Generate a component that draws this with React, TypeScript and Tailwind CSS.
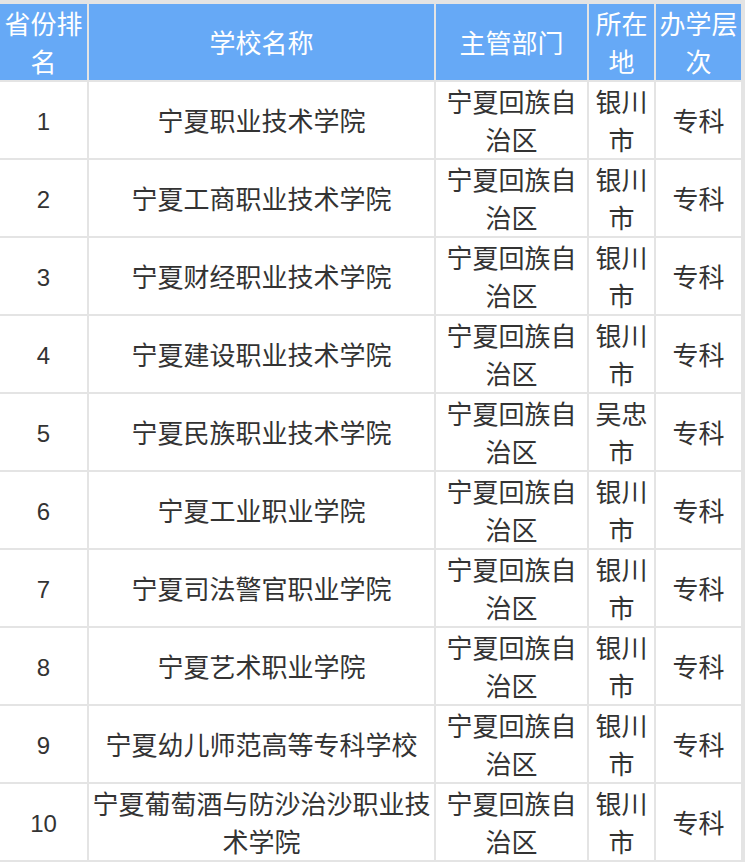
const HEADERS = ['省份排名', '学校名称', '主管部门', '所在地', '办学层次']

const ROWS: [string, string, string, string, string][] = [
  ['1', '宁夏职业技术学院', '宁夏回族自治区', '银川市', '专科'],
  ['2', '宁夏工商职业技术学院', '宁夏回族自治区', '银川市', '专科'],
  ['3', '宁夏财经职业技术学院', '宁夏回族自治区', '银川市', '专科'],
  ['4', '宁夏建设职业技术学院', '宁夏回族自治区', '银川市', '专科'],
  ['5', '宁夏民族职业技术学院', '宁夏回族自治区', '吴忠市', '专科'],
  ['6', '宁夏工业职业学院', '宁夏回族自治区', '银川市', '专科'],
  ['7', '宁夏司法警官职业学院', '宁夏回族自治区', '银川市', '专科'],
  ['8', '宁夏艺术职业学院', '宁夏回族自治区', '银川市', '专科'],
  ['9', '宁夏幼儿师范高等专科学校', '宁夏回族自治区', '银川市', '专科'],
  ['10', '宁夏葡萄酒与防沙治沙职业技术学院', '宁夏回族自治区', '银川市', '专科'],
]

const cjk = "font-['Noto_Sans_CJK_SC','Noto_Sans',sans-serif]"

export default function App() {
  return (
    <div className="w-[745px] bg-white">
      <div className="bg-[#e4e4e4] pt-[4px] pr-[4px] pb-[2px]">
        <div
          className={`grid grid-cols-[87px_345px_151px_65px_85px] auto-rows-[76px] gap-[2px] ${cjk}`}
        >
          {HEADERS.map((h) => (
            <div
              key={h}
              className="flex items-center justify-center bg-[#66a9f6] px-[3px] text-center text-[26px] leading-[38px] text-white"
            >
              {h}
            </div>
          ))}
          {ROWS.map((row) => (
            <Row key={row[0]} row={row} />
          ))}
        </div>
      </div>
    </div>
  )
}

function Row({ row }: { row: [string, string, string, string, string] }) {
  const [rank, name, dept, city, level] = row
  return (
    <>
      <div className="flex items-center justify-center bg-white pt-[4px] font-['Liberation_Sans',sans-serif] text-[24px] text-[#333333]">
        {rank}
      </div>
      {[name, dept, city, level].map((text, i) => (
        <div
          key={i}
          className="flex items-center justify-center bg-white px-[3px] text-center text-[26px] leading-[38px] text-[#333333]"
        >
          {text}
        </div>
      ))}
    </>
  )
}
